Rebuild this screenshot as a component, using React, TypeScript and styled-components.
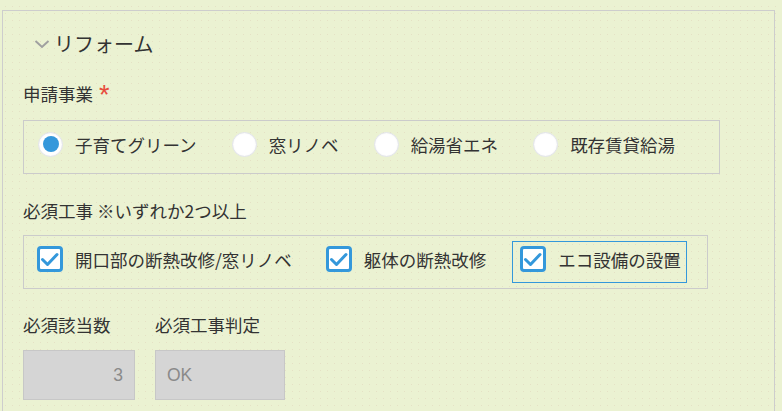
import styled, { createGlobalStyle } from "styled-components";

const GlobalStyle = createGlobalStyle`
  html, body {
    margin: 0;
    padding: 0;
  }
  body {
    width: 782px;
    height: 411px;
    overflow: hidden;
    background-color: #ebf2d2;
    background-image: radial-gradient(circle, rgba(215, 185, 165, 0.3) 0.6px, transparent 1px);
    background-size: 7px 7px;
    background-position: 2px 3px;
    font-family: "Noto Sans CJK JP", "Noto Sans", sans-serif;
    color: #333;
  }
`;

const Panel = styled.section`
  box-sizing: border-box;
  height: 401px;
  margin: 10px 7px 0 2px;
  border: 1px solid #cdcdcd;
  border-bottom: none;
  padding: 23px 0 0 20px;
`;

const Header = styled.div`
  display: flex;
  align-items: center;
  height: 20px;
  padding-left: 11px;
`;

const Title = styled.h2`
  margin: 0 0 0 4px;
  font-size: 20px;
  line-height: 20px;
  font-weight: 400;
  color: #333;
`;

const Label = styled.div<{ $gap: number }>`
  margin-top: ${(p) => p.$gap}px;
  font-size: 17.5px;
  line-height: 24px;
  white-space: nowrap;
`;

const Required = styled.span`
  display: inline-block;
  margin-left: 6px;
  color: #e74c3c;
  font-family: "Liberation Sans", Arial, sans-serif;
  font-size: 27px;
  line-height: 24px;
  vertical-align: top;
  transform: translateY(1px);
`;

const Group = styled.div<{ $width: number }>`
  box-sizing: border-box;
  display: flex;
  width: ${(p) => p.$width}px;
  border: 1px solid #cbcbcb;
`;

const RadioGroup = styled(Group)`
  margin-top: 14px;
  height: 54px;
  padding: 10px 14px 16px;
  gap: 35px;
`;

const RadioItem = styled.label`
  display: flex;
  align-items: center;
  height: 26px;
  gap: 12px;
  font-size: 17.5px;
  white-space: nowrap;
`;

const RadioCircle = styled.span<{ $checked?: boolean }>`
  box-sizing: border-box;
  display: flex;
  align-items: center;
  justify-content: center;
  width: 25px;
  height: 25px;
  border-radius: 50%;
  background: #fff;
  border: 1px solid #e2e4ea;
  box-shadow: inset 0 0 2px rgba(0, 0, 0, 0.06);

  &::after {
    content: "";
    display: ${(p) => (p.$checked ? "block" : "none")};
    width: 16px;
    height: 16px;
    border-radius: 50%;
    background: #3498db;
  }
`;

const CheckGroup = styled(Group)`
  margin-top: 12px;
  height: 54px;
  padding: 5px 0 5px 5px;
  gap: 20px;
`;

const CheckItem = styled.label<{ $focused?: boolean }>`
  box-sizing: border-box;
  display: flex;
  align-items: flex-start;
  height: 42px;
  padding: 4px 5px 10px 7px;
  border: 1px solid ${(p) => (p.$focused ? "#3498db" : "transparent")};
`;

const CheckRow = styled.span`
  display: flex;
  align-items: center;
  height: 26px;
  gap: 12px;
  font-size: 17.5px;
  white-space: nowrap;
`;

const CheckBox = styled.span`
  box-sizing: border-box;
  display: flex;
  align-items: center;
  justify-content: center;
  width: 26px;
  height: 26px;
  border: 3px solid #3498db;
  border-radius: 4px;
  background: #fff;
`;

const Fields = styled.div`
  display: flex;
  gap: 20px;
  margin-top: 24px;
`;

const Field = styled.div<{ $width: number }>`
  width: ${(p) => p.$width}px;
`;

const FieldLabel = styled.div`
  font-size: 17.5px;
  line-height: 24px;
  white-space: nowrap;
`;

const ReadOnlyBox = styled.div<{ $align: "left" | "right" }>`
  box-sizing: border-box;
  display: flex;
  align-items: center;
  justify-content: ${(p) => (p.$align === "right" ? "flex-end" : "flex-start")};
  margin-top: 13px;
  height: 50px;
  padding: 0 11px;
  background: #d5d5d5;
  border: 1px solid #c7c7c7;
  color: #8a8a8a;
  font-family: "Liberation Sans", Arial, sans-serif;
  font-size: 17.5px;
`;

const Chevron = () => (
  <svg width="16" height="10" viewBox="0 0 16 10">
    <path d="M1.5 2 L8 8 L14.5 2" fill="none" stroke="#a0a0a0" strokeWidth="2" />
  </svg>
);

const Check = () => (
  <svg width="20" height="20" viewBox="0 0 20 20">
    <path
      d="M2.5 10.5 L7.5 15.5 L17 5.5"
      fill="none"
      stroke="#3498db"
      strokeWidth="3"
      strokeLinecap="round"
      strokeLinejoin="round"
    />
  </svg>
);

const programs = [
  { name: "子育てグリーン", checked: true },
  { name: "窓リノベ" },
  { name: "給湯省エネ" },
  { name: "既存賃貸給湯" },
];

const works = [
  { name: "開口部の断熱改修/窓リノベ" },
  { name: "躯体の断熱改修" },
  { name: "エコ設備の設置", focused: true },
];

export default function App() {
  return (
    <>
      <GlobalStyle />
      <Panel>
        <Header>
          <Chevron />
          <Title>リフォーム</Title>
        </Header>

        <Label $gap={28}>
          申請事業<Required>*</Required>
        </Label>
        <RadioGroup $width={697}>
          {programs.map((p) => (
            <RadioItem key={p.name}>
              <RadioCircle $checked={p.checked} />
              {p.name}
            </RadioItem>
          ))}
        </RadioGroup>

        <Label $gap={25}>必須工事 ※いずれか2つ以上</Label>
        <CheckGroup $width={685}>
          {works.map((w) => (
            <CheckItem key={w.name} $focused={w.focused}>
              <CheckRow>
                <CheckBox>
                  <Check />
                </CheckBox>
                {w.name}
              </CheckRow>
            </CheckItem>
          ))}
        </CheckGroup>

        <Fields>
          <Field $width={112}>
            <FieldLabel>必須該当数</FieldLabel>
            <ReadOnlyBox $align="right">3</ReadOnlyBox>
          </Field>
          <Field $width={130}>
            <FieldLabel>必須工事判定</FieldLabel>
            <ReadOnlyBox $align="left">OK</ReadOnlyBox>
          </Field>
        </Fields>
      </Panel>
    </>
  );
}
